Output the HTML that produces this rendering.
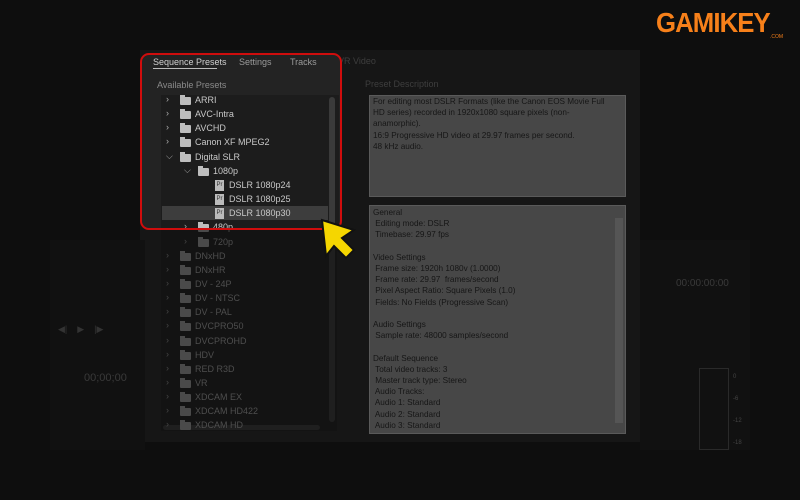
<!DOCTYPE html>
<html><head><style>
body{margin:0;width:800px;height:500px;background:#0e0e0e;overflow:hidden;position:relative;font-family:"Liberation Sans",sans-serif;}
.a{position:absolute}
.t{position:absolute;font-size:9px;color:#4e4e4e;white-space:nowrap;line-height:11px}
.fold{position:absolute;width:11px;height:8px;background:#4a4a4a;border-radius:1px}
.fold:before{content:"";position:absolute;left:0;top:-2px;width:5px;height:3px;background:#4a4a4a}
.chev{position:absolute;font-size:9px;color:#444}
.in .t{color:#c8c8c8}.in .fold,.in .fold:before{background:#bdbdbd}.in .chev{color:#aaa}
.file{position:absolute;width:9px;height:11px;background:#bbb;font-size:6px;color:#333;line-height:11px;text-align:center}
.box{position:absolute;background:#474747;border:1px solid #5a5a5a;font-size:8.2px;color:#161616;line-height:11.2px;padding:0 3px;white-space:pre;box-sizing:border-box}
</style></head><body>
<div class="a" style="left:140px;top:50px;width:500px;height:392px;background:#161616"></div>
<div class="a" style="left:50px;top:240px;width:95px;height:210px;background:#111"></div>
<div class="a" style="left:640px;top:240px;width:110px;height:210px;background:#111"></div>
<div class="t" style="left:676px;top:278px;font-size:10px;color:#3a3a3a">00:00:00:00</div>
<div class="t" style="left:84px;top:373px;font-size:11px;color:#3a3a3a">00;00;00</div>
<div class="t" style="left:58px;top:324px;color:#333">◀|&nbsp;&nbsp;&nbsp;&nbsp;▶&nbsp;&nbsp;&nbsp;&nbsp;|▶</div>
<div class="a" style="left:699px;top:368px;width:28px;height:80px;border:1px solid #2a2a2a"></div>
<div class="t" style="left:733px;top:372px;font-size:6px;color:#444">0<br><br>-6<br><br>-12<br><br>-18</div>
<div class="a" style="left:161px;top:95px;width:176px;height:336px;background:#131313"></div>
<div class="a" style="left:329px;top:97px;width:6px;height:325px;background:#1f1f1f;border-radius:3px"></div>
<div class="a" style="left:163px;top:425px;width:157px;height:5px;background:#1f1f1f;border-radius:3px"></div>
<div class="t" style="left:365px;top:79px;color:#3e3e3e">Preset Description</div>
<div class="t" style="left:338px;top:56px;color:#3e3e3e">VR Video</div>
<div id="rows"></div>
<div class="a in" style="left:140px;top:53px;width:202px;height:177px;background:#232323;border:2px solid #d00d0d;border-radius:9px;box-sizing:border-box;overflow:hidden">
 <div class="t" style="left:11px;top:2px;color:#d0d0d0">Sequence Presets</div>
 <div class="a" style="left:11px;top:13px;width:64px;height:1px;background:#bbb"></div>
 <div class="t" style="left:97px;top:2px;color:#9a9a9a">Settings</div>
 <div class="t" style="left:148px;top:2px;color:#9a9a9a">Tracks</div>
 <div class="t" style="left:15px;top:25px;color:#8a8a8a">Available Presets</div>
 <div class="a" style="left:19px;top:40px;width:178px;height:140px;background:#1c1c1c"></div>
 <div class="a" style="left:187px;top:42px;width:6px;height:130px;background:#3a3a3a;border-radius:3px"></div>
 <div class="a" style="left:20px;top:151px;width:166px;height:14px;background:#3d3d3d"></div>
 <div id="inrows"></div>
</div>
<div class="box" style="left:369px;top:95px;width:257px;height:102px">For editing most DSLR Formats (like the Canon EOS Movie Full
HD series) recorded in 1920x1080 square pixels (non-
anamorphic).
16:9 Progressive HD video at 29.97 frames per second.
48 kHz audio.</div>
<div class="box" style="left:369px;top:205px;width:257px;height:229px;padding-top:1px">General
 Editing mode: DSLR
 Timebase: 29.97 fps

Video Settings
 Frame size: 1920h 1080v (1.0000)
 Frame rate: 29.97  frames/second
 Pixel Aspect Ratio: Square Pixels (1.0)
 Fields: No Fields (Progressive Scan)

Audio Settings
 Sample rate: 48000 samples/second

Default Sequence
 Total video tracks: 3
 Master track type: Stereo
 Audio Tracks:
 Audio 1: Standard
 Audio 2: Standard
 Audio 3: Standard</div>
<div class="a" style="left:615px;top:218px;width:8px;height:205px;background:#555"></div>
<svg class="a" style="left:312px;top:212px" width="56" height="56" viewBox="0 0 56 56"><path d="M10 8 L14 44 L22 34 L34 46 L42 38 L30 26 L42 18 Z" fill="#f5d600" stroke="#111" stroke-width="2"/></svg>
<div class="a" style="left:656px;top:8px;font:bold 28px/30px 'Liberation Sans',sans-serif;color:#f7801a;letter-spacing:-1px;transform:scaleX(0.92);transform-origin:left">GAMIKEY</div>
<div class="t" style="left:770px;top:32px;font-size:5px;color:#f7801a">.COM</div>
<script>
var outer=[["ARRI",0,'f'],["AVC-Intra",0,'f'],["AVCHD",0,'f'],["Canon XF MPEG2",0,'f'],["Digital SLR",0,'o'],["1080p",1,'o'],["DSLR 1080p24",2],["DSLR 1080p25",2],["DSLR 1080p30",2],["480p",1,'f'],["720p",1,'f'],["DNxHD",0,'f'],["DNxHR",0,'f'],["DV - 24P",0,'f'],["DV - NTSC",0,'f'],["DV - PAL",0,'f'],["DVCPRO50",0,'f'],["DVCPROHD",0,'f'],["HDV",0,'f'],["RED R3D",0,'f'],["VR",0,'f'],["XDCAM EX",0,'f'],["XDCAM HD422",0,'f'],["XDCAM HD",0,'f']];
function build(el,dx,dy,max){var h="";outer.forEach(function(r,i){var y=101+i*14.15-6;if(y>max)return;y+=dy;var x=dx+r[1]*18;
if(r[2]){h+='<div class="chev" style="left:'+(x+166)+'px;top:'+(y-1)+'px">'+(r[2]=='o'?'⌵':'›')+'</div>';h+='<div class="fold" style="left:'+(x+180)+'px;top:'+(y+2)+'px"></div>';h+='<div class="t" style="left:'+(x+195)+'px;top:'+y+'px">'+r[0]+'</div>';}
else{h+='<div class="file" style="left:'+(dx+215)+'px;top:'+y+'px">Pr</div><div class="t" style="left:'+(dx+229)+'px;top:'+y+'px">'+r[0]+'</div>';}});el.innerHTML=h;}
build(document.getElementById('rows'),0,0,500);
build(document.getElementById('inrows'),-142,-55,230);
</script>
</body></html>
